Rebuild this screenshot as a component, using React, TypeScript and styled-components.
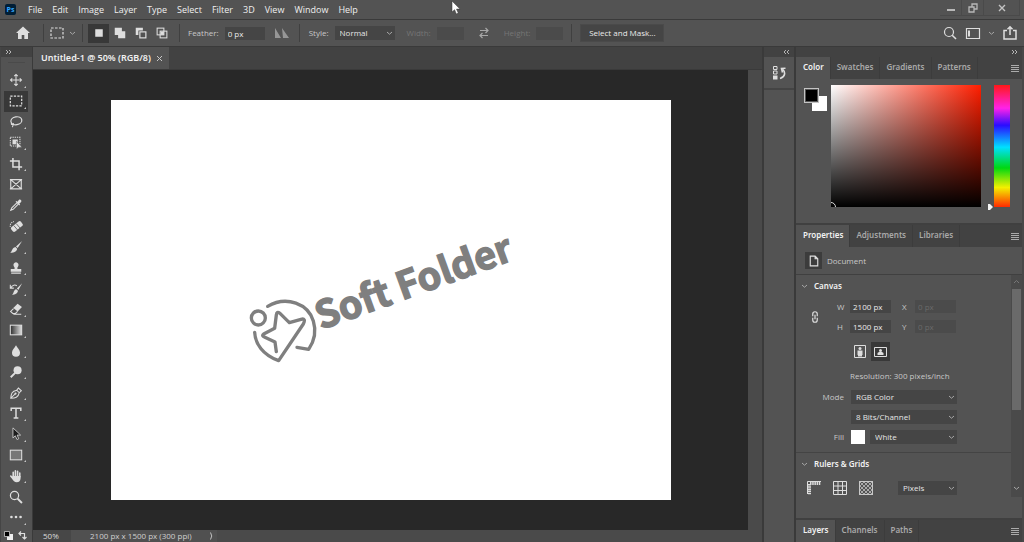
import React from "react";
import styled, { createGlobalStyle, css } from "styled-components";

const c = {
  panel: "#535353",
  bar: "#424242",
  field: "#454545",
  line: "#3a3a3a",
  dark: "#282828",
  text: "#dcdcdc",
  dim: "#a9a9a9",
  off: "#757575",
};

const Global = createGlobalStyle`
  * { box-sizing: border-box; }
  body { margin: 0; background: ${c.panel}; color: ${c.text}; font: 8px/12px "Open Sans", "Liberation Sans", sans-serif; overflow: hidden; }
  button, input, select { font: inherit; color: inherit; border: 0; padding: 0; margin: 0; background: none; border-radius: 0; }
  svg { display: block; flex: none; }
`;

const Window = styled.div`
  display: flex;
  flex-direction: column;
  height: 100vh;
  background: ${c.panel};
`;

/* ---------- top bars ---------- */

const TitleBar = styled.header`
  display: flex;
  align-items: center;
  height: 20px;
  padding-left: 5px;
  border-bottom: 1px solid ${c.line};
`;

const AppBadge = styled.span`
  width: 11px;
  height: 11px;
  margin-right: 7px;
  border-radius: 2px;
  background: #001e36;
  color: #31a8ff;
  font: 700 7px/11px "Open Sans", sans-serif;
  text-align: center;
`;

const MenuBar = styled.nav`
  display: flex;
  flex: 1;
`;

const MenuButton = styled.button`
  padding: 0 5px;
  font: 9px/18px "Open Sans", sans-serif;
  color: #efefef;
`;

const WindowControls = styled.div`
  display: flex;
  align-self: flex-start;
  margin-right: 4px;
`;

const WindowButton = styled.button<{ $wide?: boolean }>`
  display: flex;
  align-items: center;
  justify-content: center;
  width: ${(p) => (p.$wide ? 36 : 22)}px;
  height: 16px;
  border: solid #4a4a4a;
  border-width: 0 1px 1px 0;
`;

const OptionsBar = styled.div`
  display: flex;
  align-items: center;
  height: 27px;
  padding-left: 16px;
  border-bottom: 1px solid ${c.line};
`;

const Separator = styled.span<{ $before: number; $after: number }>`
  width: 1px;
  height: 18px;
  margin: 0 ${(p) => p.$after}px 0 ${(p) => p.$before}px;
  background: #404040;
`;

const IconButton = styled.button<{ $active?: boolean; $w?: number }>`
  display: flex;
  align-items: center;
  justify-content: center;
  flex: none;
  width: ${(p) => p.$w ?? 21}px;
  height: 19px;
  background: ${(p) => (p.$active ? "#383838" : "none")};
`;

const Field = styled.label<{ $off?: boolean; $gap?: number }>`
  display: flex;
  align-items: center;
  gap: ${(p) => p.$gap ?? 6}px;
  color: ${(p) => (p.$off ? c.off : "#c8c8c8")};
`;

const TextInput = styled.input<{ $w: number }>`
  width: ${(p) => p.$w}px;
  height: 13px;
  padding: 0 3px;
  background: ${c.field};
  color: #ebebeb;
  &:disabled {
    background: #4b4b4b;
    color: #6a6a6a;
  }
`;

const SelectFrame = styled.span<{ $w: number }>`
  position: relative;
  display: block;
  width: ${(p) => p.$w}px;
  select {
    display: block;
    appearance: none;
    width: 100%;
    height: 14px;
    padding: 0 5px;
    background: ${c.field};
    color: #e6e6e6;
  }
  svg {
    position: absolute;
    right: 2px;
    top: 4px;
    pointer-events: none;
  }
`;

const MaskButton = styled.button`
  width: 84px;
  height: 18px;
  border: 1px solid #4a4a4a;
  background: ${c.field};
  color: #ebebeb;
`;

const SizeLimits = styled.div`
  display: flex;
  align-items: center;
  margin-left: 12px;
`;

const Spacer = styled.span`
  flex: 1;
`;

/* ---------- work area ---------- */

const Main = styled.main`
  display: flex;
  flex: 1;
  min-height: 0;
`;

const ToolColumn = styled.aside`
  display: flex;
  flex-direction: column;
  width: 33px;
  border-right: 1px solid ${c.line};
  border-left: 1px solid #454545;
`;

const DockHeader = styled.div<{ $end?: boolean }>`
  display: flex;
  align-items: center;
  justify-content: ${(p) => (p.$end ? "flex-end" : "flex-start")};
  flex: none;
  height: 10px;
  padding: 0 4px;
  background: ${c.bar};
`;

const Grip = styled.div`
  height: 13px;
  margin: 0 7px;
  background: linear-gradient(#4a4a4a, #4a4a4a) 0 5px / 100% 1px no-repeat;
`;

const ToolList = styled.div`
  display: flex;
  flex: 1;
  flex-direction: column;
  min-height: 0;
`;

const ToolButton = styled.button<{ $active?: boolean }>`
  position: relative;
  display: flex;
  flex: 1;
  align-items: center;
  justify-content: center;
  width: 24px;
  margin-left: 3px;
  min-height: 0;
  background: ${(p) => (p.$active ? "#383838" : "none")};
`;

const Corner = styled.i`
  position: absolute;
  right: 2px;
  bottom: 3px;
  border: 1px solid #c8c8c8;
  border-left-color: transparent;
  border-top-color: transparent;
`;

const ColorSwitch = styled.div`
  display: flex;
  gap: 5px;
  flex: none;
  height: 14px;
  padding: 3px 0 0 3px;
`;

const Editor = styled.section`
  display: flex;
  flex: 1;
  flex-direction: column;
  min-width: 0;
`;

const DocumentTabs = styled.div`
  display: flex;
  height: 23px;
  background: ${c.bar};
  border-bottom: 1px solid ${c.line};
`;

const DocumentTab = styled.div`
  display: flex;
  align-items: center;
  gap: 5px;
  padding: 0 6px 0 8px;
  background: ${c.panel};
  color: #f0f0f0;
  font: 600 9px/12px "Noto Sans", sans-serif;
`;

const Workspace = styled.div`
  display: flex;
  flex: 1;
  min-height: 0;
`;

const Pasteboard = styled.div`
  display: flex;
  flex: 1;
  align-items: center;
  justify-content: center;
  background: ${c.dark};
`;

const Artboard = styled.div`
  width: 560px;
  aspect-ratio: 7 / 5;
  background: #fff;
  svg {
    width: 100%;
    height: 100%;
  }
`;

const ScrollTrack = styled.div`
  width: 14px;
  background: #4a4a4a;
`;

const StatusBar = styled.footer`
  display: flex;
  height: 12px;
  background: #4a4a4a;
`;

const Zoom = styled.span`
  width: 38px;
  padding-left: 10px;
  background: #474747;
`;

const DocInfo = styled.span`
  display: flex;
  align-items: center;
  justify-content: space-between;
  width: 146px;
  padding: 0 3px 0 19px;
  background: #505050;
  color: #cfcfcf;
`;

/* ---------- right docks ---------- */

const IconDock = styled.aside`
  display: flex;
  flex-direction: column;
  width: 34px;
  border: solid ${c.line};
  border-width: 0 2px;
`;

const IconDockCell = styled.div`
  display: flex;
  align-items: center;
  justify-content: center;
  height: 33px;
  border-bottom: 2px solid #444;
`;

const PanelDock = styled.aside`
  display: flex;
  flex-direction: column;
  width: 228px;
  border-right: 2px solid #484848;
`;

const PanelTabs = styled.div`
  display: flex;
  align-items: stretch;
  flex: none;
  height: 22px;
  background: ${c.bar};
`;

const PanelTab = styled.button<{ $active?: boolean }>`
  padding: 0 6px 2px;
  border-right: 1px solid #3c3c3c;
  font: 600 8px/12px "Noto Sans", sans-serif;
  color: ${c.dim};
  ${(p) =>
    p.$active &&
    css`
      padding-left: 7px;
      background: ${c.panel};
      color: #f2f2f2;
    `}
`;

const PanelMenu = styled.button`
  margin: 0 3px 0 auto;
  display: flex;
  align-items: center;
`;

const ColorBody = styled.div`
  display: flex;
  height: 146px;
  padding: 6px 12px 0 8px;
  border-bottom: 2px solid #404040;
`;

const Swatches = styled.div`
  display: grid;
  grid-template: 8px 15px / 8px 15px;
  width: 27px;
  padding-top: 3px;
`;

const Swatch = styled.button<{ $front?: boolean }>`
  width: 15px;
  height: 15px;
  background: #fff;
  grid-area: 2 / 2;
  ${(p) =>
    p.$front &&
    css`
      z-index: 1;
      grid-area: 1 / 1;
      border: 1px solid #c4c4c4;
      box-shadow: inset 0 0 0 1px #555;
      background: #000;
    `}
`;

const Spectrum = styled.div`
  position: relative;
  overflow: hidden;
  flex: 1;
  height: 122px;
  background: linear-gradient(to top, #000, transparent), linear-gradient(to right, #fff, #ff1e00);
`;

const SpectrumDot = styled.i`
  position: absolute;
  left: -5px;
  bottom: -5px;
  width: 10px;
  height: 10px;
  border: 1px solid #ddd;
  border-radius: 50%;
`;

const HueSlider = styled.div`
  position: relative;
  width: 16px;
  height: 122px;
  margin-left: 13px;
  background: linear-gradient(#ff1818, #ff22e8 19%, #2a0cff 33%, #00e0ff 51%, #00d812 68%, #f4f000 84%, #ff2a00);
  svg {
    position: absolute;
    left: -7px;
    bottom: -4px;
  }
`;

const DocumentRow = styled.div`
  display: flex;
  align-items: center;
  gap: 5px;
  flex: none;
  height: 28px;
  padding-left: 9px;
  border-bottom: 1px solid #404040;
  color: #c8c8c8;
`;

const DocumentIcon = styled.span`
  display: flex;
  align-items: center;
  justify-content: center;
  width: 17px;
  height: 17px;
  background: #3c3c3c;
`;

const PropertiesBody = styled.div`
  display: flex;
  flex: none;
  height: 222px;
`;

const Sections = styled.div`
  flex: 1;
`;

const SectionTitle = styled.h2`
  display: flex;
  align-items: center;
  gap: 6px;
  height: 22px;
  margin: 0;
  padding-left: 5px;
  color: #f2f2f2;
  font: 600 8px/12px "Noto Sans", sans-serif;
`;

const SizeRow = styled.div`
  display: grid;
  grid-template-columns: 28px 65px 1fr;
  align-items: center;
  padding: 3px 0 0 13px;
`;

const SizeFields = styled.div`
  display: grid;
  gap: 7px;
`;

const SizeField = styled.label`
  display: grid;
  grid-template-columns: 8px 41px;
  gap: 5px;
  align-items: center;
  color: #c8c8c8;
`;

const OrientationRow = styled.div`
  display: flex;
  gap: 2px;
  padding: 9px 0 0 54px;
`;

const Resolution = styled.p`
  margin: 9px 0 8px;
  padding-left: 54px;
  color: #c8c8c8;
`;

const PropertyRow = styled.label`
  display: grid;
  grid-template-columns: 48px 1fr;
  gap: 7px;
  align-items: center;
  height: 14px;
  margin-bottom: 6px;
  color: #c8c8c8;
  > span:first-child {
    text-align: right;
  }
`;

const FillValue = styled.span`
  display: flex;
  gap: 5px;
`;

const FillSwatch = styled.span`
  width: 14px;
  height: 14px;
  background: #fff;
`;

const RulerSection = styled.div`
  margin-top: 8px;
  border-top: 1px solid #444;
`;

const RulerRow = styled.div`
  display: flex;
  align-items: center;
  height: 26px;
  padding: 0 54px 0 5px;
`;

const PanelScroll = styled.div`
  display: flex;
  flex-direction: column;
  align-items: center;
  justify-content: space-between;
  width: 11px;
  padding: 4px 0 6px;
  background: #4a4a4a;
`;

const PanelThumb = styled.div`
  width: 9px;
  height: 121px;
  margin: 5px 0 auto;
  background: #6a6a6a;
`;

const LayersDock = styled.div`
  margin-top: auto;
  border-top: 2px solid #404040;
`;

const Cursor = styled.svg`
  position: absolute;
  left: 451px;
  top: 0;
`;

/* ---------- drawings ---------- */

const Glyph = ({ children, size = 16 }: { children: React.ReactNode; size?: number }) => (
  <svg width={size} height={size} viewBox="0 0 16 16" fill="none" stroke="#dedede" strokeWidth="1.2" aria-hidden="true">
    {children}
  </svg>
);

const Chevron = () => (
  <svg width="7" height="6" viewBox="0 0 7 6" fill="none" stroke="#a8a8a8" aria-hidden="true">
    <path d="M1 2l2.5 2.2L6 2" />
  </svg>
);

const DoubleChevron = ({ left }: { left?: boolean }) => (
  <svg width="7" height="6" viewBox="0 0 7 6" fill="none" stroke="#c4c4c4" strokeWidth=".9" aria-hidden="true">
    <path d={left ? "M3 1L1 3l2 2M6 1L4 3l2 2" : "M1 1l2 2-2 2M4 1l2 2-2 2"} />
  </svg>
);

const MenuLines = () => (
  <svg width="8" height="7" viewBox="0 0 8 7" stroke="#b8b8b8" aria-hidden="true">
    <path d="M0 .5h8M0 2.500h8M0 4.500h8M0 6.500h8" strokeWidth=".9" />
  </svg>
);

const solid = { fill: "#dedede", stroke: "none" };

const tools: { name: string; corner?: boolean; art: React.ReactNode }[] = [
  { name: "Move", corner: true, art: <path d="M8 1.500v13M1.500 8h13M6 3.700L8 1.700l2 2M6 12.300l2 2 2-2M3.700 6l-2 2 2 2M12.300 6l2 2-2 2" /> },
  { name: "Rectangular marquee", corner: true, art: <rect x="1.500" y="2.500" width="13" height="11" strokeDasharray="2.600 1.400" strokeWidth="1.400" /> },
  {
    name: "Lasso",
    corner: true,
    art: (
      <>
        <ellipse cx="8.400" cy="6.600" rx="6.300" ry="4.500" transform="rotate(-10 8.400 6.600)" strokeWidth="1.400" />
        <path d="M3.200 9.200c-1 .6-.6 1.900.7 1.700s1.700-1.200.4-1.500M4.300 11c.7 1 .3 2-.7 2.800" />
      </>
    ),
  },
  {
    name: "Object selection",
    corner: true,
    art: (
      <>
        <rect x="1.500" y="1.500" width="11" height="10" strokeDasharray="1.500 1" />
        <rect x="4" y="4" width="6" height="5.500" {...solid} />
        <path d="M8.500 6v9l2.200-2 4-.2z" {...solid} stroke="#535353" strokeWidth=".6" />
      </>
    ),
  },
  { name: "Crop", corner: true, art: <path d="M4.500 1v10.500h10.500M1 4.500h10.500v10.500" strokeWidth="1.700" /> },
  { name: "Frame", art: <path d="M2 3h12v10.500h-12zM2 3l12 10.500M14 3l-12 10.500M1 3h2M13 3h2M1 13.500h2M13 13.500h2" strokeWidth="1.300" /> },
  {
    name: "Eyedropper",
    corner: true,
    art: (
      <>
        <path d="M9 5.500l-5.800 5.800-1.200 2.800 2.800-1.200 5.800-5.800" />
        <path d="M7.500 4.300l1-1 1.200.9 1.500-1.900c1.500-1.500 4 .8 2.500 2.500l-1.900 1.500.9 1.200-1 1z" {...solid} />
      </>
    ),
  },
  {
    name: "Healing brush",
    corner: true,
    art: (
      <>
        <rect x="2" y="5.300" width="14" height="6.600" rx="2" transform="rotate(-38 9 8.600)" {...solid} />
        <path d="M5.500 7.500l4.700 5.500M8.300 5.300l4.700 5.500" stroke="#535353" strokeWidth=".9" />
        <path d="M1.500 9a5 5 0 014-6" strokeDasharray="1.300 1" />
      </>
    ),
  },
  {
    name: "Brush",
    corner: true,
    art: <path d="M15 1L8 7.300l1.900 1.900L15 1zM7.300 8L9.300 10c-.3 3.500-4.200 4.700-8 4.500 2.500-1.200 2-5.700 6-6.500z" {...solid} />,
  },
  {
    name: "Clone stamp",
    corner: true,
    art: <path d="M8 1.500a3 3 0 012.400 4.700C9.400 7.500 9.500 8 9.700 9H14v3.200H2V9h4.300c.2-1 .3-1.500-.7-2.800A3 3 0 018 1.500zM2.500 13.200h11v1.300h-11z" {...solid} />,
  },
  {
    name: "History brush",
    corner: true,
    art: (
      <>
        <path d="M15 1.500L9 7.500l1.700 1.700zM8.300 8.200l1.900 1.800c-.2 3-3.400 4.500-6.800 4.500 2.300-1.300 1.500-5.700 4.900-6.300z" {...solid} />
        <path d="M2 6.500C4 3 7 3 9 4.300M1.500 3v4H5.500" />
      </>
    ),
  },
  {
    name: "Eraser",
    corner: true,
    art: (
      <>
        <path d="M9.800 2l5 3.800-4.900 5-5-3.900z" {...solid} />
        <path d="M5.200 7.500L1.800 10.800l2.500 2.300h3l2.500-2.300M5 14h9" />
      </>
    ),
  },
  {
    name: "Gradient",
    corner: true,
    art: (
      <>
        <defs>
          <linearGradient id="ramp">
            <stop offset="0" stopColor="#2c2c2c" />
            <stop offset="1" stopColor="#e0e0e0" />
          </linearGradient>
        </defs>
        <rect x="1.500" y="2.500" width="13" height="11" fill="url(#ramp)" />
      </>
    ),
  },
  { name: "Blur", corner: true, art: <path d="M8 1.500c1.700 3.300 4.600 5.500 4.600 8.600a4.600 4.600 0 01-9.200 0c0-3.100 2.900-5.300 4.600-8.600z" {...solid} /> },
  {
    name: "Dodge",
    corner: true,
    art: (
      <>
        <circle cx="9.800" cy="6" r="4.600" {...solid} />
        <path d="M7 9l-5 5" strokeWidth="2.200" />
      </>
    ),
  },
  {
    name: "Pen",
    corner: true,
    art: (
      <>
        <path d="M2 14c.3-5 1.200-8.200 6.800-9.200l2.900 2.900c-1 5.400-4.700 6-9.700 6.300zM8.800 4.800l2-2.500 3.300 3.200-2.400 2.200M2 14l5-5" />
        <circle cx="7.500" cy="8.700" r="1.200" {...solid} />
      </>
    ),
  },
  { name: "Type", corner: true, art: <path d="M2.500 5.700V2.700h11v3M8 2.500v11.200M5.300 13.700h5.400" strokeWidth="1.700" /> },
  {
    name: "Path selection",
    corner: true,
    art: <path d="M4.500 1v11.500l2.700-2.500 1.900 4.300 2-.9L9.300 9.200h4z" fill="#1c1c1c" strokeWidth=".9" />,
  },
  { name: "Rectangle", corner: true, art: <rect x="1.500" y="2.500" width="13" height="11" fill="#777" /> },
  {
    name: "Hand",
    corner: true,
    art: (
      <>
        <path d="M4.800 9V3.700M7.300 8V2M9.800 8V2.500M12.300 9V4.500M2 8l3.300 4" strokeWidth="1.800" strokeLinecap="round" />
        <path d="M4 8h9.200v2.800c0 2.700-1.700 4.200-4.400 4.200S5 13.500 4 11z" {...solid} />
      </>
    ),
  },
  {
    name: "Zoom",
    art: (
      <>
        <circle cx="6.300" cy="6.300" r="4.700" strokeWidth="1.400" />
        <path d="M9.800 9.800l5 5" strokeWidth="2.200" />
      </>
    ),
  },
  {
    name: "More tools",
    corner: true,
    art: (
      <>
        <circle cx="2.800" cy="8" r="1.500" {...solid} />
        <circle cx="8" cy="8" r="1.500" {...solid} />
        <circle cx="13.200" cy="8" r="1.500" {...solid} />
      </>
    ),
  },
];

const selectionModes = [
  { name: "New selection", art: <rect x="3" y="3" width="10" height="10" {...solid} /> },
  { name: "Add to selection", art: <path d="M1 1h9.500v4.500H15V15H5.500v-4.500H1z" {...solid} /> },
  {
    name: "Subtract from selection",
    art: (
      <>
        <path d="M1 1h9.500v3.500H4.500v6H1z" {...solid} />
        <rect x="6.500" y="6.500" width="8" height="8" strokeWidth="1.600" />
      </>
    ),
  },
  {
    name: "Intersect with selection",
    art: (
      <>
        <rect x="1.500" y="1.500" width="9" height="9" strokeWidth="1.400" />
        <rect x="5.500" y="5.500" width="9" height="9" strokeWidth="1.400" />
        <rect x="6" y="6" width="4.500" height="4.500" {...solid} />
      </>
    ),
  },
];

const Dropdown = ({ label, w, value }: { label: string; w: number; value: string }) => (
  <SelectFrame $w={w}>
    <select aria-label={label} defaultValue={value}>
      <option>{value}</option>
    </select>
    <Chevron />
  </SelectFrame>
);

const Tabs = ({ names }: { names: string[] }) => (
  <PanelTabs>
    {names.map((n, i) => (
      <PanelTab key={n} $active={i === 0}>
        {n}
      </PanelTab>
    ))}
    <PanelMenu aria-label="Panel menu">
      <MenuLines />
    </PanelMenu>
  </PanelTabs>
);

const Artwork = () => (
  <svg viewBox="0 0 560 400" role="img" aria-label="Soft Folder logo">
    <defs>
      <clipPath id="edge">
        <rect x="138" y="100" width="264" height="180" />
      </clipPath>
    </defs>
    <g clipPath="url(#edge)">
      <g transform="translate(120 115) scale(.3333)" fill="none" stroke="#7f7f7f" strokeWidth="10" strokeLinecap="round" strokeLinejoin="round">
        <circle cx="82" cy="309" r="21" />
        <path d="M110 274C168 240 232 268 247 318c10 32 3 60-14 85l-35-6" />
        <path d="M71 352c1 33 24 68 72 85l74-110c6-12 3-17-7-14l-35 10-28-28c-7-5-10-3-11 5l-5 40-33 17c-5 4-3 7 2 9l32 15 4 29" />
      </g>
      <text
        transform="translate(210 230) rotate(-20)"
        fill="#7f7f7f"
        stroke="#7f7f7f"
        strokeWidth="1.4"
        fontFamily="'Noto Sans CJK JP', sans-serif"
        fontWeight="700"
        fontSize="38"
      >
        Soft Folder
      </text>
    </g>
  </svg>
);

export default function App() {
  return (
    <Window>
      <Global />
      <TitleBar>
        <AppBadge>Ps</AppBadge>
        <MenuBar>
          {["File", "Edit", "Image", "Layer", "Type", "Select", "Filter", "3D", "View", "Window", "Help"].map((m) => (
            <MenuButton key={m}>{m}</MenuButton>
          ))}
        </MenuBar>
        <WindowControls>
          <WindowButton aria-label="Minimize">
            <svg width="10" height="10" stroke="#b8b8b8" strokeWidth="2">
              <path d="M1 7h8" />
            </svg>
          </WindowButton>
          <WindowButton aria-label="Restore">
            <svg width="10" height="10" fill="none" stroke="#b8b8b8" strokeWidth="1.3">
              <path d="M1 4h5v5H1zM4 4V1h5v5H6" />
            </svg>
          </WindowButton>
          <WindowButton $wide aria-label="Close">
            <svg width="10" height="10" stroke="#c4c4c4" strokeWidth="1.4">
              <path d="M2 2l6 6M8 2L2 8" />
            </svg>
          </WindowButton>
        </WindowControls>
      </TitleBar>

      <OptionsBar>
        <IconButton $w={13} aria-label="Home">
          <Glyph>
            <path d="M8 1.500L1 8h2v6h3.700v-4h2.600v4H13V8h2z" {...solid} />
          </Glyph>
        </IconButton>
        <Separator $before={14} $after={5} />
        <IconButton $w={15} aria-label="Marquee preset">
          <Glyph>
            <rect x="2" y="3" width="12" height="10" strokeDasharray="2.600 1.400" />
          </Glyph>
        </IconButton>
        <IconButton $w={17} aria-label="Preset list">
          <Chevron />
        </IconButton>
        <Separator $before={1} $after={5} />
        {selectionModes.map((m, i) => (
          <IconButton key={m.name} $active={i === 0} aria-label={m.name}>
            <Glyph size={12}>{m.art}</Glyph>
          </IconButton>
        ))}
        <Separator $before={7} $after={8} />
        <Field>
          Feather:
          <TextInput $w={40} defaultValue="0 px" />
        </Field>
        <IconButton $w={34} aria-label="Anti-alias">
          <svg width="14" height="10" fill="#969696">
            <path d="M0 0l6 10H0zM7 0l7 10H8z" />
          </svg>
        </IconButton>
        <Separator $before={0} $after={9} />
        <Field>
          Style:
          <Dropdown label="Style" w={60} value="Normal" />
        </Field>
        <SizeLimits>
          <Field $off>
            Width:
            <TextInput $w={27} disabled />
          </Field>
          <IconButton $w={40} aria-label="Swap width and height">
            <svg width="12" height="12" fill="none" stroke="#a8a8a8" strokeWidth="1.200">
              <path d="M2 3.500h8M7.500 1L10 3.500 7.500 6M10 8.500H2M4.500 6L2 8.500 4.500 11" />
            </svg>
          </IconButton>
          <Field $off>
            Height:
            <TextInput $w={27} disabled />
          </Field>
        </SizeLimits>
        <Separator $before={8} $after={8} />
        <MaskButton>Select and Mask...</MaskButton>
        <Spacer />
        <IconButton $w={18} aria-label="Search">
          <Glyph>
            <circle cx="7" cy="7" r="4.500" />
            <path d="M10.200 10.200l3.800 3.800" strokeWidth="1.600" />
          </Glyph>
        </IconButton>
        <IconButton $w={28} aria-label="Workspace">
          <Glyph>
            <path d="M1.500 3.500h13v10h-13z" />
            <path d="M4 5.500v6" strokeWidth="2" />
          </Glyph>
        </IconButton>
        <IconButton $w={9} aria-label="Workspace list">
          <Chevron />
        </IconButton>
        <IconButton $w={28} aria-label="Share">
          <Glyph>
            <path d="M5 5.500H2v8.500h12V5.500h-3M8 10V2M5.500 4.300L8 1.800l2.500 2.500" strokeWidth="1.500" />
          </Glyph>
        </IconButton>
      </OptionsBar>

      <Main>
        <ToolColumn>
          <DockHeader>
            <DoubleChevron />
          </DockHeader>
          <Grip />
          <ToolList>
            {tools.map((t) => (
              <ToolButton key={t.name} aria-label={t.name} $active={t.name === "Rectangular marquee"}>
                <Glyph size={14}>{t.art}</Glyph>
                {t.corner && <Corner />}
              </ToolButton>
            ))}
          </ToolList>
          <ColorSwitch>
            <svg width="9" height="9">
              <path d="M3 3h6v6H3z" fill="#eee" />
              <path d="M.5 .5h5v5h-5z" fill="#000" stroke="#ccc" strokeWidth=".8" />
            </svg>
            <svg width="9" height="9" fill="none" stroke="#dedede" strokeWidth="1.200">
              <path d="M3 .500L1 2.500l2 2M1 2.500h5.500V8M4.500 6l2 2 2-2" />
            </svg>
          </ColorSwitch>
        </ToolColumn>

        <Editor>
          <DocumentTabs>
            <DocumentTab>
              Untitled-1 @ 50% (RGB/8)
              <button aria-label="Close document">
                <svg width="7" height="7" stroke="#c8c8c8">
                  <path d="M1 1l5 5M6 1L1 6" />
                </svg>
              </button>
            </DocumentTab>
          </DocumentTabs>
          <Workspace>
            <Pasteboard>
              <Artboard>
                <Artwork />
              </Artboard>
            </Pasteboard>
            <ScrollTrack />
          </Workspace>
          <StatusBar>
            <Zoom>50%</Zoom>
            <DocInfo>
              2100 px x 1500 px (300 ppi)
              <svg width="4" height="8" fill="none" stroke="#c0c0c0">
                <path d="M.500 .500Q3 4 .500 7.500" />
              </svg>
            </DocInfo>
          </StatusBar>
        </Editor>

        <IconDock>
          <DockHeader $end>
            <DoubleChevron left />
          </DockHeader>
          <IconDockCell>
            <svg width="13" height="15" fill="none" stroke="#dedede">
              <path d="M.500 1.500h3.500v3h-3.500zM.500 6h3.500v3h-3.500z" />
              <path d="M0 10.500h4.500v4H0z" fill="#dedede" stroke="none" />
              <path d="M7 13.500c5-1.500 6-6 2.500-9.500M12.500 3.200L8.500 3.500l1 4" strokeWidth="1.600" />
            </svg>
          </IconDockCell>
        </IconDock>

        <PanelDock>
          <DockHeader $end>
            <DoubleChevron />
          </DockHeader>
          <Tabs names={["Color", "Swatches", "Gradients", "Patterns"]} />
          <ColorBody>
            <Swatches>
              <Swatch $front aria-label="Foreground color" />
              <Swatch aria-label="Background color" />
            </Swatches>
            <Spectrum>
              <SpectrumDot />
            </Spectrum>
            <HueSlider>
              <svg width="6" height="8" fill="#f4f4f4">
                <path d="M1 1h2L6 4 3 7H1z" />
              </svg>
            </HueSlider>
          </ColorBody>

          <Tabs names={["Properties", "Adjustments", "Libraries"]} />
          <DocumentRow>
            <DocumentIcon>
              <Glyph size={12}>
                <path d="M3 1.500h6.500L13 5v9.500H3zM9.500 1.500V5H13" strokeWidth="1.500" />
              </Glyph>
            </DocumentIcon>
            Document
          </DocumentRow>
          <PropertiesBody>
            <Sections>
              <SectionTitle>
                <Chevron />
                Canvas
              </SectionTitle>
              <SizeRow>
                <Glyph size={12}>
                  <path d="M5 7V4a3 3 0 016 0v3M5 9v3a3 3 0 006 0V9M8 5v6" strokeWidth="1.600" />
                </Glyph>
                <SizeFields>
                  <SizeField>
                    W
                    <TextInput $w={41} defaultValue="2100 px" />
                  </SizeField>
                  <SizeField>
                    H
                    <TextInput $w={41} defaultValue="1500 px" />
                  </SizeField>
                </SizeFields>
                <SizeFields>
                  <SizeField>
                    X
                    <TextInput $w={41} defaultValue="0 px" disabled />
                  </SizeField>
                  <SizeField>
                    Y
                    <TextInput $w={41} defaultValue="0 px" disabled />
                  </SizeField>
                </SizeFields>
              </SizeRow>
              <OrientationRow>
                <IconButton $w={19} aria-label="Portrait">
                  <svg width="12" height="13" fill="#dedede">
                    <path d="M.500 .500h11v12h-11z" fill="none" stroke="#dedede" />
                    <circle cx="6" cy="3.500" r="1.500" />
                    <path d="M3.500 5.500h5v4.500H8v1.500H4V10h-.5z" />
                  </svg>
                </IconButton>
                <IconButton $w={19} $active aria-label="Landscape">
                  <svg width="13" height="10" fill="#dedede">
                    <path d="M.500 .500h12v9h-12z" fill="none" stroke="#dedede" />
                    <circle cx="6.500" cy="3.500" r="1.500" />
                    <path d="M3.500 8V6l1.500-1h3l1.500 1v2z" />
                  </svg>
                </IconButton>
              </OrientationRow>
              <Resolution>Resolution: 300 pixels/inch</Resolution>
              <PropertyRow>
                <span>Mode</span>
                <Dropdown label="Mode" w={106} value="RGB Color" />
              </PropertyRow>
              <PropertyRow>
                <span />
                <Dropdown label="Bit depth" w={106} value="8 Bits/Channel" />
              </PropertyRow>
              <PropertyRow>
                <span>Fill</span>
                <FillValue>
                  <FillSwatch />
                  <Dropdown label="Fill" w={87} value="White" />
                </FillValue>
              </PropertyRow>
              <RulerSection>
                <SectionTitle>
                  <Chevron />
                  Rulers &amp; Grids
                </SectionTitle>
                <RulerRow>
                  <IconButton $w={26} aria-label="Rulers">
                    <svg width="14" height="14" fill="none" stroke="#dedede">
                      <path d="M.500 13V.500H14" strokeWidth="1" />
                      <path d="M2.500 3v11M3 2.500h11" strokeWidth="3" strokeDasharray="1.500 .7" />
                    </svg>
                  </IconButton>
                  <IconButton $w={26} aria-label="Grid">
                    <svg width="14" height="14" fill="none" stroke="#dedede">
                      <path d="M.500 .500h13v13H.500zM5 .500v13M9.500 .500v13M.500 5h13M.500 9.500h13" />
                    </svg>
                  </IconButton>
                  <IconButton $w={26} aria-label="Transparency grid">
                    <svg width="14" height="14" fill="none" stroke="#c8c8c8">
                      <defs>
                        <pattern id="checks" width="4" height="4" patternUnits="userSpaceOnUse">
                          <path d="M0 0h2v2H0zM2 2h2v2H2z" fill="#aaa" stroke="none" />
                        </pattern>
                      </defs>
                      <rect x=".5" y=".5" width="13" height="13" fill="url(#checks)" />
                    </svg>
                  </IconButton>
                  <Spacer />
                  <Dropdown label="Ruler units" w={59} value="Pixels" />
                </RulerRow>
              </RulerSection>
            </Sections>
            <PanelScroll>
              <svg width="7" height="5" fill="none" stroke="#777">
                <path d="M1 4l2.500-2.500L6 4" />
              </svg>
              <PanelThumb />
              <Chevron />
            </PanelScroll>
          </PropertiesBody>
          <LayersDock>
            <Tabs names={["Layers", "Channels", "Paths"]} />
          </LayersDock>
        </PanelDock>
      </Main>

      <Cursor width="10" height="15" viewBox="0 0 10 15" aria-hidden="true">
        <path d="M1 1v11l2.600-2.300L5.300 14l2-.9-1.800-4H9z" fill="#fff" stroke="#333" strokeWidth=".5" />
      </Cursor>
    </Window>
  );
}
